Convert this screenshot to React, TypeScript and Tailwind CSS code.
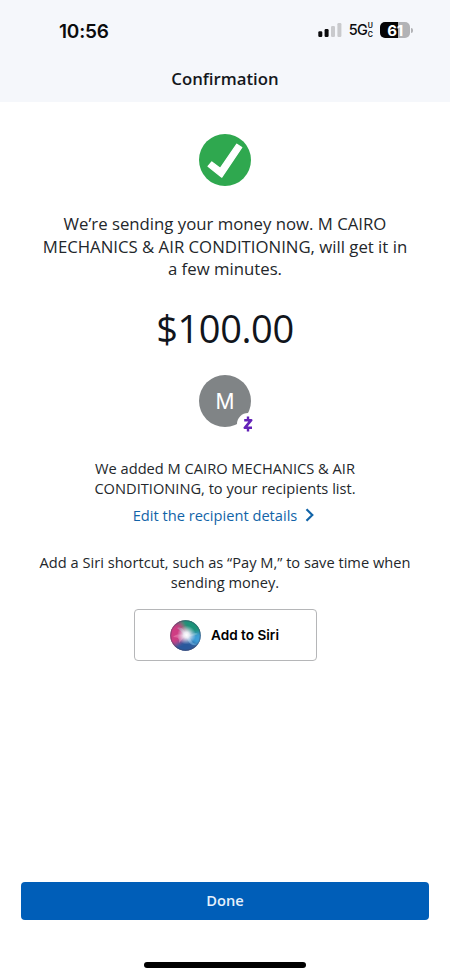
function SignalBars() {
  return (
    <svg width="24" height="16" viewBox="0 0 24 16" aria-hidden="true">
      <rect x="0.3" y="9.3" width="4" height="5.7" rx="1.2" fill="#0b0b0d" />
      <rect x="6.6" y="7" width="4" height="8" rx="1.2" fill="#0b0b0d" />
      <rect x="13" y="4" width="4" height="11" rx="1.2" fill="#c9cacd" />
      <rect x="19.4" y="1" width="4" height="14" rx="1.2" fill="#c9cacd" />
    </svg>
  );
}

function Battery() {
  return (
    <div className="flex items-center gap-px">
      <div className="flex h-4 w-[30px] items-center justify-center rounded-[5px] bg-linear-to-r from-[#050506] from-61% to-[#b2b3b6] to-61%">
        <span className="font-['Inter',sans-serif] text-[15px] leading-none font-bold tracking-[-0.3px] text-white">
          61
        </span>
      </div>
      <div className="h-[5px] w-[2px] rounded-r-full bg-[#b2b3b6]" />
    </div>
  );
}

function StatusBar() {
  return (
    <div className="flex h-[62px] items-center justify-between pr-[37px] pl-[59px] text-[#0b0b0d]">
      <span className="font-['Inter',sans-serif] text-[19px] leading-none font-semibold tracking-[-0.2px]">
        10:56
      </span>
      <div className="-mt-0.5 flex items-center">
        <SignalBars />
        <span className="ml-[7px] font-['Inter',sans-serif] text-[14.5px] leading-none font-medium tracking-[-0.9px]">
          5G
        </span>
        <span className="mr-[7px] ml-px flex flex-col font-['Inter',sans-serif] text-[7px] leading-[9px] font-semibold">
          <span>U</span>
          <span>C</span>
        </span>
        <Battery />
      </div>
    </div>
  );
}

function SuccessIcon() {
  return (
    <svg width="52" height="52" viewBox="0 0 52 52" className="mx-auto" aria-hidden="true">
      <circle cx="26" cy="26" r="26" fill="#2fa84f" />
      <path
        d="M9 32.3 12.8 28 21.2 34.3 37.8 10.2 42.8 13.4 22.8 43.2Z"
        fill="#fff"
        stroke="#fff"
        strokeWidth="1.2"
        strokeLinejoin="round"
      />
    </svg>
  );
}

function RecipientAvatar() {
  return (
    <div className="relative mx-auto flex size-[52px] items-center justify-center rounded-full bg-[#808486]">
      <span className="font-['Inter',sans-serif] text-[21px] leading-none text-white">M</span>
      <div className="absolute top-[38px] left-[38px] flex size-[22px] items-center justify-center rounded-full bg-white">
        <svg width="10" height="16" viewBox="0 0 10 16" fill="none" stroke="#6322b8" aria-hidden="true">
          <path d="M1.2 4.2H8.2L1.8 11.8H9" strokeWidth="2.6" strokeLinejoin="round" />
          <path d="M5 .5V4M5 12V15.5" strokeWidth="2.4" />
        </svg>
      </div>
    </div>
  );
}

function SiriOrb() {
  return (
    <svg width="31" height="31" viewBox="0 0 31 31" aria-hidden="true">
      <defs>
        <clipPath id="orb">
          <circle cx="15.5" cy="15.5" r="15.2" />
        </clipPath>
        <radialGradient id="core">
          <stop offset="0" stopColor="#fff" />
          <stop offset=".3" stopColor="#f4f5fc" stopOpacity=".9" />
          <stop offset="1" stopColor="#d6d9ee" stopOpacity="0" />
        </radialGradient>
        <filter id="soft" x="-50%" y="-50%" width="200%" height="200%">
          <feGaussianBlur stdDeviation="2.2" />
        </filter>
      </defs>
      <g clipPath="url(#orb)">
        <rect width="31" height="31" fill="#58506f" />
        <g filter="url(#soft)">
          <path d="M9 -2H33V13L17 14Z" fill="#1f9279" />
          <path d="M-2 5 10 3 17 15 8 25-2 24Z" fill="#cf3d83" />
          <path d="M17 15 33 12V24L23 27Z" fill="#3c9fd9" />
          <path d="M4 25 16 17 27 25 20 34H7Z" fill="#2b589c" />
        </g>
        <path d="M7 8C13 6 14 11 16 15S24 10 28 14C25 15 22 17 16 16Z" fill="#a5ddda" opacity=".35" />
        <path d="M3 17C8 12 13 16 16 15L9 23C9 20 10 17 3 17Z" fill="#f2a6c8" opacity=".4" />
        <path d="M16 15C22 17 20 24 27 24 21 27 19 23 16 16Z" fill="#8dcdf4" opacity=".45" />
        <circle cx="16.5" cy="15" r="9.5" fill="url(#core)" />
      </g>
      <circle cx="15.5" cy="15.5" r="14.8" fill="none" stroke="#39405d" strokeOpacity=".35" />
    </svg>
  );
}

export default function App() {
  return (
    <div className="flex h-[976px] w-[450px] flex-col bg-white font-['Open_Sans',sans-serif] text-[#23272b]">
      <header className="h-[102px] bg-[#f5f7fb]">
        <StatusBar />
        <h1 className="text-center text-[16.75px] leading-[34px] font-semibold text-[#14171c]">Confirmation</h1>
      </header>

      <main className="flex-1 pt-8 text-center">
        <SuccessIcon />
        <p className="mt-[27px] text-[16.75px] leading-[22.7px]">
          We’re sending your money now. M CAIRO
          <br />
          MECHANICS &amp; AIR CONDITIONING, will get it in
          <br />a few minutes.
        </p>
        <p className="mt-[22px] text-[38px] leading-[50px] tracking-[-0.4px] text-[#11151c]">$100.00</p>
        <div className="mt-[22px]">
          <RecipientAvatar />
        </div>
        <p className="mt-[31px] text-[14.65px] leading-5">
          We added M CAIRO MECHANICS &amp; AIR
          <br />
          CONDITIONING, to your recipients list.
        </p>
        <a
          href="#"
          className="mt-[7px] mr-[3px] flex items-center justify-center gap-[8px] text-[14.65px] leading-5 text-[#1264a8]"
        >
          Edit the recipient details
          <svg width="9" height="14" viewBox="0 0 9 14" fill="none" stroke="currentColor" aria-hidden="true">
            <path d="M1.5 1.2 7.3 7 1.5 12.8" strokeWidth="2.2" />
          </svg>
        </a>
        <p className="mt-[27px] text-[14.65px] leading-5">
          Add a Siri shortcut, such as “Pay M,” to save time when
          <br />
          sending money.
        </p>
        <button className="mx-auto mt-[17px] flex h-[52px] w-[183px] items-center justify-center gap-[10px] rounded-[4px] border border-[#b5b6b8] pr-px font-['Inter',sans-serif] text-[13.6px] font-semibold text-black">
          <SiriOrb />
          Add to Siri
        </button>
      </main>

      <footer className="px-[21px] pb-2">
        <button className="h-[38px] w-full rounded-[4px] bg-[#005eb8] text-[14.65px] font-semibold text-[#e6f1fc]">
          Done
        </button>
        <div className="mx-auto mt-[42px] h-[6px] w-[162px] rounded-full bg-black" />
      </footer>
    </div>
  );
}
